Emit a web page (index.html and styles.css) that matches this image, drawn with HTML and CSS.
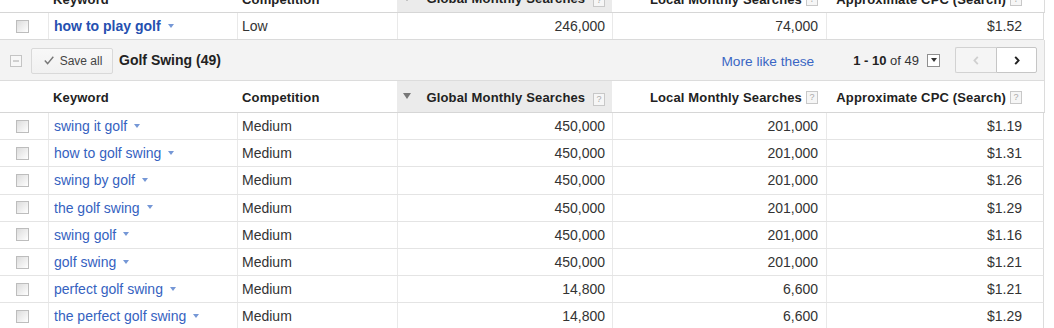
FILE: index.html
```html
<!DOCTYPE html>
<html>
<head>
<meta charset="utf-8">
<link rel="stylesheet" href="styles.css">
</head>
<body>
<div class="table">
  <div class="row head head-top">
    <div class="c"></div>
    <div class="c">Keyword</div>
    <div class="c">Competition</div>
    <div class="c num sorted"><span class="sort-arrow"></span><span class="hlabel">Global Monthly Searches <span class="help">?</span></span></div>
    <div class="c num local">Local Monthly Searches <span class="help">?</span></div>
    <div class="c num cpc">Approximate CPC (Search) <span class="help">?</span></div>
  </div>

  <div class="row data first">
    <div class="c"><span class="cb"></span></div>
    <div class="c kw"><a class="link bold">how to play golf</a><span class="dd"></span></div>
    <div class="c comp">Low</div>
    <div class="c num">246,000</div>
    <div class="c num local">74,000</div>
    <div class="c num cpc">$1.52</div>
  </div>

  <div class="group">
    <svg class="minus" width="12" height="12" viewBox="0 0 12 12"><rect x="0.5" y="0.5" width="11" height="11" fill="#f7f7f7" stroke="#c4c4c4"/><line x1="3" y1="6" x2="9" y2="6" stroke="#a8a8a8" stroke-width="1"/></svg>
    <button class="save"><svg width="10" height="9" viewBox="0 0 10 9"><path d="M0.8 4.6 L3.6 7.6 L9.3 0.8" fill="none" stroke="#777" stroke-width="1.4"/></svg>Save all</button>
    <span class="gtitle">Golf Swing (49)</span>
    <span class="spacer"></span>
    <a class="more">More like these</a>
    <span class="pages"><b>1 - 10</b> of 49</span>
    <span class="pselect"><span class="tri-small"></span></span>
    <span class="pager">
      <span class="pbtn prev"><svg width="6" height="9" viewBox="0 0 6 9"><path d="M4.8 0.8 L1.4 4.5 L4.8 8.2" fill="none" stroke="#cfcfcf" stroke-width="1.8"/></svg></span>
      <span class="pbtn next"><svg width="6" height="9" viewBox="0 0 6 9"><path d="M1.2 0.8 L4.6 4.5 L1.2 8.2" fill="none" stroke="#222" stroke-width="1.9"/></svg></span>
    </span>
  </div>

  <div class="row head">
    <div class="c"></div>
    <div class="c">Keyword</div>
    <div class="c">Competition</div>
    <div class="c num sorted"><span class="sort-arrow"></span><span class="hlabel">Global Monthly Searches <span class="help">?</span></span></div>
    <div class="c num local">Local Monthly Searches <span class="help">?</span></div>
    <div class="c num cpc">Approximate CPC (Search) <span class="help">?</span></div>
  </div>

  <div class="row data">
    <div class="c"><span class="cb"></span></div>
    <div class="c kw"><a class="link">swing it golf</a><span class="dd"></span></div>
    <div class="c comp">Medium</div>
    <div class="c num">450,000</div>
    <div class="c num local">201,000</div>
    <div class="c num cpc">$1.19</div>
  </div>
  <div class="row data">
    <div class="c"><span class="cb"></span></div>
    <div class="c kw"><a class="link">how to golf swing</a><span class="dd"></span></div>
    <div class="c comp">Medium</div>
    <div class="c num">450,000</div>
    <div class="c num local">201,000</div>
    <div class="c num cpc">$1.31</div>
  </div>
  <div class="row data">
    <div class="c"><span class="cb"></span></div>
    <div class="c kw"><a class="link">swing by golf</a><span class="dd"></span></div>
    <div class="c comp">Medium</div>
    <div class="c num">450,000</div>
    <div class="c num local">201,000</div>
    <div class="c num cpc">$1.26</div>
  </div>
  <div class="row data">
    <div class="c"><span class="cb"></span></div>
    <div class="c kw"><a class="link">the golf swing</a><span class="dd"></span></div>
    <div class="c comp">Medium</div>
    <div class="c num">450,000</div>
    <div class="c num local">201,000</div>
    <div class="c num cpc">$1.29</div>
  </div>
  <div class="row data">
    <div class="c"><span class="cb"></span></div>
    <div class="c kw"><a class="link">swing golf</a><span class="dd"></span></div>
    <div class="c comp">Medium</div>
    <div class="c num">450,000</div>
    <div class="c num local">201,000</div>
    <div class="c num cpc">$1.16</div>
  </div>
  <div class="row data">
    <div class="c"><span class="cb"></span></div>
    <div class="c kw"><a class="link">golf swing</a><span class="dd"></span></div>
    <div class="c comp">Medium</div>
    <div class="c num">450,000</div>
    <div class="c num local">201,000</div>
    <div class="c num cpc">$1.21</div>
  </div>
  <div class="row data">
    <div class="c"><span class="cb"></span></div>
    <div class="c kw"><a class="link">perfect golf swing</a><span class="dd"></span></div>
    <div class="c comp">Medium</div>
    <div class="c num">14,800</div>
    <div class="c num local">6,600</div>
    <div class="c num cpc">$1.21</div>
  </div>
  <div class="row data">
    <div class="c"><span class="cb"></span></div>
    <div class="c kw"><a class="link">the perfect golf swing</a><span class="dd"></span></div>
    <div class="c comp">Medium</div>
    <div class="c num">14,800</div>
    <div class="c num local">6,600</div>
    <div class="c num cpc">$1.29</div>
  </div>
</div>
</body>
</html>
```

FILE: styles.css
```css
html, body {
  margin: 0;
  padding: 0;
  background: #fff;
}
body {
  font-family: "Liberation Sans", Arial, sans-serif;
  color: #333;
}
.table {
  width: 1045px;
  height: 328px;
  overflow: hidden;
}
.row {
  display: grid;
  grid-template-columns: 48px 189px 160px 215px 214px 218px;
  width: 1044px;
  border-right: 1px solid #dcdcdc;
}
.c {
  display: flex;
  align-items: center;
  box-sizing: border-box;
  min-width: 0;
  white-space: nowrap;
}
.num {
  justify-content: flex-end;
  padding-right: 7px;
}
.num.local {
  padding-right: 8px;
}
.num.cpc {
  padding-right: 22px;
}

/* header */
.head {
  height: 31px;
  border-bottom: 1px solid #d6d6d6;
  font-size: 13px;
  font-weight: bold;
  color: #222;
  letter-spacing: 0.15px;
}
.head .c {
  padding-top: 2px;
}
.head-top {
  height: 28px;
  margin-top: -16px;
}
.head .c {
  padding-left: 5px;
}
.head .c.num {
  padding-left: 0;
}
.head .c.sorted {
  background: #ebebeb;
  justify-content: space-between;
  padding-left: 6px;
}
.sort-arrow {
  width: 0;
  height: 0;
  border-left: 4px solid transparent;
  border-right: 4px solid transparent;
  border-top: 6px solid #777;
  margin-top: -3px;
}
.help {
  display: inline-flex;
  align-items: center;
  justify-content: center;
  width: 10px;
  height: 11px;
  margin-left: 4px;
  border: 1px solid #c8c8c8;
  background: #f6f6f6;
  color: #aaa;
  font-size: 9px;
  font-weight: normal;
  letter-spacing: 0;
  line-height: 1;
}

/* data rows */
.data {
  height: 27.2px;
  box-sizing: border-box;
  border-bottom: 1px solid #e4e4e4;
  font-size: 14px;
  color: #333;
}
.data.first {
  height: 27px;
  border-bottom-color: #dadada;
}
.data .c + .c {
  border-left: 1px solid #e9e9e9;
}
.data .kw {
  padding-left: 5px;
}
.data .comp {
  padding-left: 4px;
}
.cb {
  width: 11px;
  height: 11px;
  margin-left: 16px;
  border: 1px solid #bdbdbd;
  background: linear-gradient(135deg, #dcdcdc 0%, #f4f4f4 70%, #ffffff 100%);
}
.link {
  color: #3562bf;
  text-decoration: none;
}
.link.bold {
  font-weight: bold;
  color: #2550b0;
}
.dd {
  width: 0;
  height: 0;
  margin-left: 7px;
  border-left: 3.5px solid transparent;
  border-right: 3.5px solid transparent;
  border-top: 4px solid #7597d6;
  margin-top: -1px;
}

/* group bar */
.group {
  display: flex;
  align-items: center;
  width: 1045px;
  height: 41px;
  box-sizing: border-box;
  background: #f3f3f3;
  border-bottom: 1px solid #dcdcdc;
  border-right: 1px solid #dcdcdc;
  padding-left: 10px;
  padding-right: 7px;
}
.minus {
  display: block;
  margin-right: 9px;
  margin-top: 1px;
}
.save {
  display: flex;
  align-items: center;
  justify-content: center;
  gap: 6px;
  width: 82px;
  height: 26px;
  box-sizing: border-box;
  margin: 1px 0 0 0;
  padding: 0 0 0 2px;
  border: 1px solid #d9d9d9;
  border-radius: 2px;
  background: linear-gradient(#f8f8f8, #f1f1f1);
  font-family: "Liberation Sans", Arial, sans-serif;
  font-size: 12px;
  color: #444;
}
.gtitle {
  margin-left: 6px;
  font-size: 14px;
  font-weight: bold;
  color: #222;
}
.spacer {
  flex: 1;
}
.more {
  font-size: 13.7px;
  color: #3a66c4;
  margin-top: 3px;
}
.pages {
  margin-left: 39px;
  font-size: 13px;
  color: #333;
}
.pages b {
  color: #222;
}
.pselect {
  display: inline-flex;
  align-items: center;
  justify-content: center;
  width: 11px;
  height: 11px;
  margin-left: 8px;
  border: 1px solid #8f8f8f;
  background: #fff;
}
.tri-small {
  width: 0;
  height: 0;
  border-left: 3px solid transparent;
  border-right: 3px solid transparent;
  border-top: 4px solid #333;
}
.pager {
  display: flex;
  margin-left: 15px;
}
.pbtn {
  display: flex;
  align-items: center;
  justify-content: center;
  width: 41px;
  height: 26px;
  box-sizing: border-box;
  border: 1px solid #d2d2d2;
}
.pbtn.prev {
  background: #f5f5f5;
  border-right: none;
  border-radius: 2px 0 0 2px;
}
.pbtn.next {
  background: #fff;
  border-color: #c6c6c6;
  border-radius: 0 2px 2px 0;
}
```
